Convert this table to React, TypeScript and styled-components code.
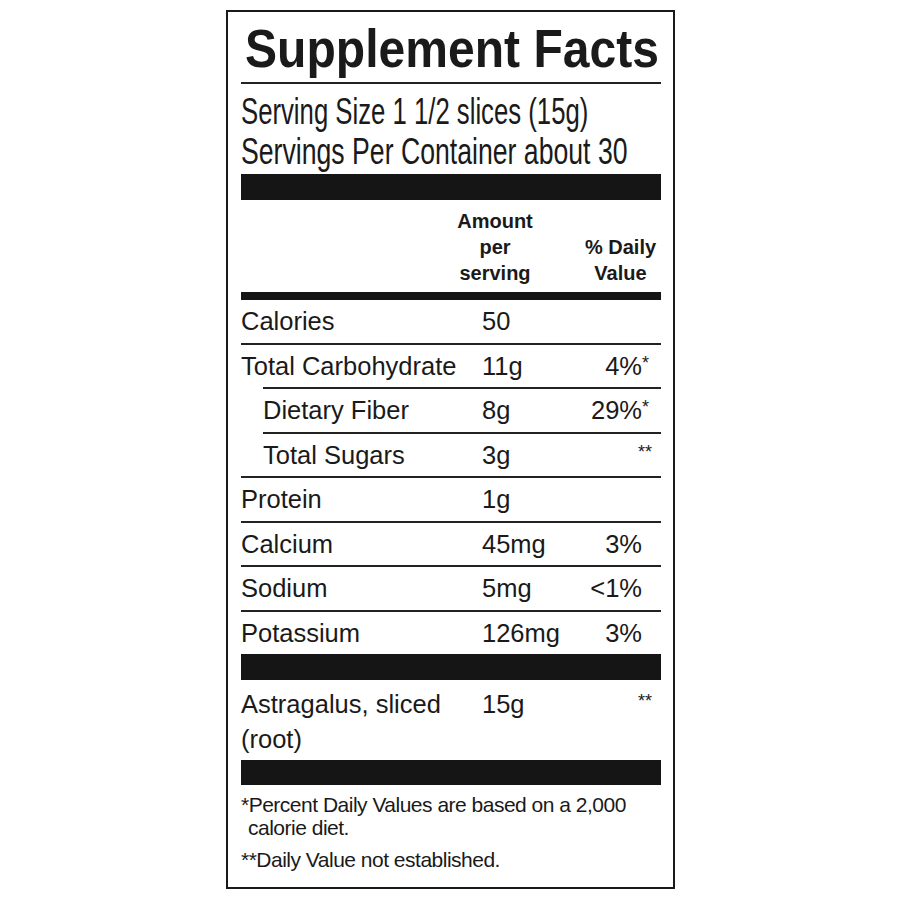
import { FC } from 'react';
import styled, { createGlobalStyle } from 'styled-components';

type Nutrient = {
  name: string;
  amount: string;
  dv?: string;
  mark?: string;
  sub?: boolean;
};

const nutrients: Nutrient[] = [
  { name: 'Calories', amount: '50' },
  { name: 'Total Carbohydrate', amount: '11g', dv: '4%', mark: '*' },
  { name: 'Dietary Fiber', amount: '8g', dv: '29%', mark: '*', sub: true },
  { name: 'Total Sugars', amount: '3g', mark: '**', sub: true },
  { name: 'Protein', amount: '1g' },
  { name: 'Calcium', amount: '45mg', dv: '3%' },
  { name: 'Sodium', amount: '5mg', dv: '<1%' },
  { name: 'Potassium', amount: '126mg', dv: '3%' },
];

const App: FC = () => {
  return (
    <>
      <GlobalStyle />
      <Label>
        <Title>Supplement Facts</Title>
        <Rule />
        <Serving>
          <ServingLine $squeeze={0.695}>Serving Size 1 1/2 slices (15g)</ServingLine>
          <ServingLine $squeeze={0.72}>Servings Per Container about 30</ServingLine>
        </Serving>
        <Bar $h={26} $gap={2} />
        <Header>
          <span />
          <HeadCell>
            Amount
            <br />
            per
            <br />
            serving
          </HeadCell>
          <HeadCell $dv>
            % Daily
            <br />
            Value
          </HeadCell>
        </Header>
        <Bar $h={8} $gap={6} />
        {nutrients.map((n, i) => (
          <Row key={n.name} $sub={n.sub} $first={i === 0}>
            <span>{n.name}</span>
            <span>{n.amount}</span>
            <Dv>
              {n.dv}
              {n.mark && <Mark $solo={!n.dv}>{n.mark}</Mark>}
            </Dv>
          </Row>
        ))}
        <Bar $h={26} $gap={0} />
        <HerbRow $first>
          <span>Astragalus, sliced (root)</span>
          <span>15g</span>
          <Dv>
            <Mark $solo>**</Mark>
          </Dv>
        </HerbRow>
        <Bar $h={25} $gap={0} />
        <Note $gap={8}>*Percent Daily Values are based on a 2,000 calorie diet.</Note>
        <Note $gap={9}>**Daily Value not established.</Note>
      </Label>
    </>
  );
};

const GlobalStyle = createGlobalStyle`
  html, body {
    margin: 0;
    background: #fff;
  }
  body {
    font-family: 'Liberation Sans', Arial, sans-serif;
    color: #1a1a1a;
  }
`;

const Label = styled.div`
  box-sizing: border-box;
  width: 449px;
  margin: 10px 0 0 226px;
  padding: 5px 12px 16px 13px;
  border: 2px solid #1a1a1a;
  background: #fff;
`;

const Title = styled.h1`
  margin: 0 0 0 4px;
  font-size: 54px;
  font-weight: 700;
  line-height: 62px;
  white-space: nowrap;
  transform: scaleX(0.89);
  transform-origin: left center;
`;

const Rule = styled.div`
  height: 2px;
  margin-top: 3px;
  background: #222;
`;

const Serving = styled.div`
  margin-top: 8px;
  font-size: 37px;
  line-height: 40px;
`;

const ServingLine = styled.div<{ $squeeze: number }>`
  white-space: nowrap;
  transform: scaleX(${(p) => p.$squeeze});
  transform-origin: left center;
`;

const Bar = styled.div<{ $h: number; $gap: number }>`
  height: ${(p) => p.$h}px;
  margin-top: ${(p) => p.$gap}px;
  background: #151515;
`;

const Header = styled.div`
  display: grid;
  grid-template-columns: 204px 100px 1fr;
  align-items: end;
  margin-top: 8px;
  font-size: 20px;
  font-weight: 700;
  line-height: 26px;
`;

const HeadCell = styled.div<{ $dv?: boolean }>`
  text-align: center;
  padding-left: ${(p) => (p.$dv ? 35 : 0)}px;
`;

const Row = styled.div<{ $sub?: boolean; $first?: boolean }>`
  display: grid;
  grid-template-columns: ${(p) => (p.$sub ? 219 : 241)}px 1fr auto;
  margin-left: ${(p) => (p.$sub ? 22 : 0)}px;
  border-top: ${(p) => (p.$first ? 'none' : '2px solid #222')};
  font-size: 25.5px;
  line-height: 42.5px;
  white-space: nowrap;
`;

const HerbRow = styled(Row)`
  align-items: start;
  padding: 7px 0 3px;
  line-height: 35px;
  white-space: normal;
`;

const Dv = styled.span`
  text-align: right;
  padding-right: 19px;
`;

const Mark = styled.span<{ $solo?: boolean }>`
  display: inline-block;
  position: relative;
  top: -6px;
  width: ${(p) => (p.$solo ? 'auto' : '0')};
  margin-right: ${(p) => (p.$solo ? -10 : 0)}px;
  font-size: 18px;
  line-height: 1;
  text-align: left;
`;

const Note = styled.p<{ $gap: number }>`
  margin: ${(p) => p.$gap}px 0 0;
  padding-left: 7px;
  text-indent: -7px;
  font-size: 21px;
  line-height: 23px;
  letter-spacing: -0.5px;
`;

export default App;
